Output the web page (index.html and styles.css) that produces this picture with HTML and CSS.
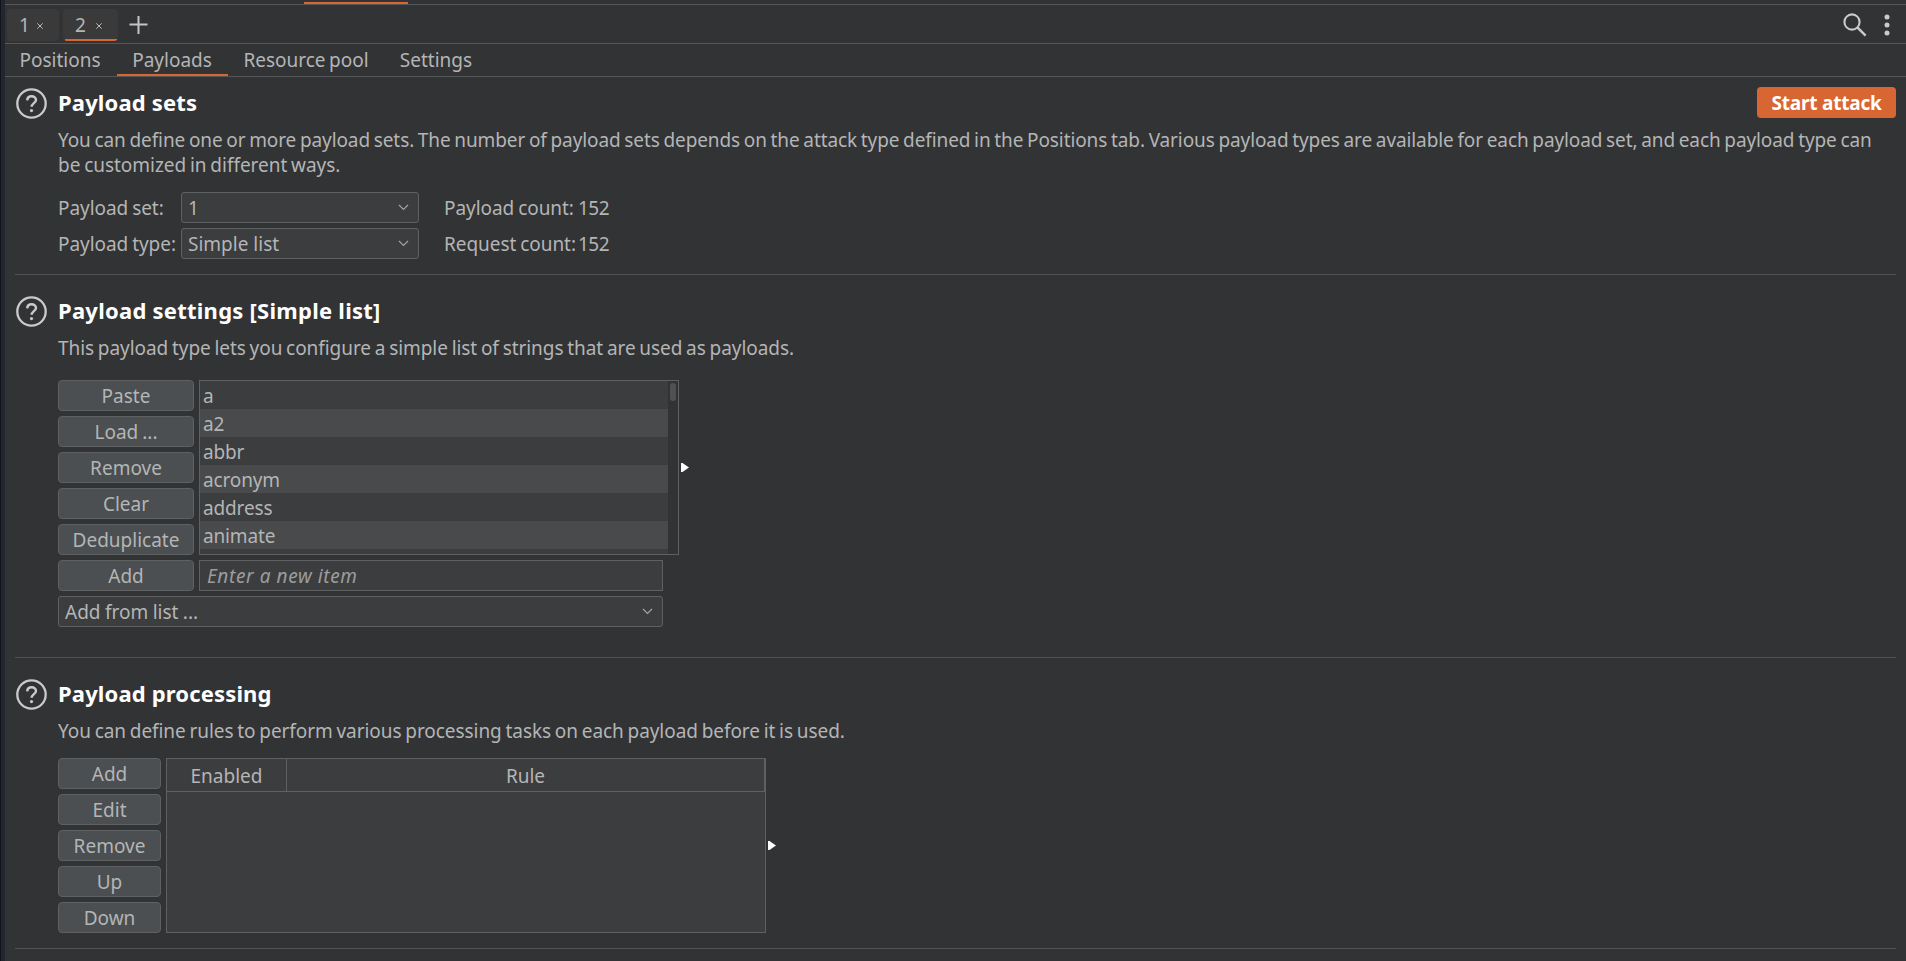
FILE: index.html
```html
<!DOCTYPE html>
<html lang="en">
<head>
<meta charset="utf-8">
<title>Intruder - Payloads</title>
<link rel="stylesheet" href="styles.css">
</head>
<body>
<svg class="defs" width="0" height="0">
  <symbol id="help" viewBox="0 0 31 31">
    <circle cx="15.5" cy="15.5" r="14.2" fill="none" stroke="#c9cacb" stroke-width="2.3"/>
    <path d="M11.2 12.3C11.4 9.7 13.2 8.3 15.6 8.3C18.2 8.3 20 9.9 20 12C20 14.8 15.6 15.6 15.6 18.8" fill="none" stroke="#c9cacb" stroke-width="2.4"/>
    <circle cx="15.5" cy="22.6" r="1.6" fill="#c9cacb"/>
  </symbol>
  <symbol id="chevron" viewBox="0 0 11 7">
    <path d="M1 1L5.5 5.5L10 1" fill="none" stroke="#a2a4a5" stroke-width="1.2"/>
  </symbol>
  <symbol id="expand" viewBox="0 0 8 9">
    <path d="M0 0H1.5L8 4.5L1.5 9H0Z" fill="#fff"/>
  </symbol>
  <symbol id="close" viewBox="0 0 6 6">
    <path d="M.3 .3L5.7 5.7M5.7 .3L.3 5.7" stroke="#bbb" stroke-width="1"/>
  </symbol>
</svg>
<div class="window">
  <div class="tool-tabs"><div class="tool-marker"></div></div>

  <div class="attack-tabs">
    <div class="attack-tab first"><span>1</span><svg class="close"><use href="#close"/></svg></div>
    <div class="attack-tab second active"><span>2</span><svg class="close"><use href="#close"/></svg></div>
    <svg class="plus" viewBox="0 0 19 18"><path d="M.5 8.5H18.5M9.5 0V18" stroke="#c4c5c6" stroke-width="2"/></svg>
    <div class="tab-tools">
      <svg class="search" viewBox="0 0 24 24"><circle cx="9" cy="9" r="7.6" fill="none" stroke="#c9cacb" stroke-width="2.1"/><path d="M14.3 14.3L22.6 22.6" stroke="#c9cacb" stroke-width="2.4"/></svg>
      <svg class="kebab" viewBox="0 0 6 22"><circle cx="3" cy="3" r="2.5"/><circle cx="3" cy="11" r="2.5"/><circle cx="3" cy="19" r="2.5"/></svg>
    </div>
  </div>

  <div class="sub-tabs">
    <div class="sub-tab w-positions">Positions</div>
    <div class="sub-tab w-payloads active">Payloads</div>
    <div class="sub-tab w-pool">Resource pool</div>
    <div class="sub-tab w-settings">Settings</div>
  </div>

  <section class="section sets">
    <div class="head"><svg class="help"><use href="#help"/></svg><h2>Payload sets</h2><button class="start">Start attack</button></div>
    <p><span class="long">You can define one or more payload sets. The number of payload sets depends on the attack type defined in the Positions tab. Various payload types are available for each payload set, and each payload type can</span><br>be customized in different ways.</p>
    <div class="form">
      <label>Payload set:</label><div class="combo"><span>1</span><svg class="chevron"><use href="#chevron"/></svg></div><span class="count">Payload count:</span><span class="number">152</span>
      <label>Payload type:</label><div class="combo"><span>Simple list</span><svg class="chevron"><use href="#chevron"/></svg></div><span class="count">Request count:</span><span class="number">152</span>
    </div>
  </section>

  <section class="section settings">
    <div class="head"><svg class="help"><use href="#help"/></svg><h2>Payload settings [Simple list]</h2></div>
    <p>This payload type lets you configure a simple list of strings that are used as payloads.</p>
    <div class="row">
      <div class="buttons wide">
        <button>Paste</button><button>Load ...</button><button>Remove</button><button>Clear</button><button>Deduplicate</button>
      </div>
      <div class="list">
        <ul><li>a</li><li>a2</li><li>abbr</li><li>acronym</li><li>address</li><li>animate</li></ul>
        <div class="scroll"><div class="thumb"></div></div>
      </div>
      <svg class="expand"><use href="#expand"/></svg>
    </div>
    <div class="row add">
      <div class="buttons wide"><button>Add</button></div>
      <div class="field">Enter a new item</div>
    </div>
    <div class="combo from-list"><span>Add from list ...</span><svg class="chevron"><use href="#chevron"/></svg></div>
  </section>

  <section class="section processing">
    <div class="head"><svg class="help"><use href="#help"/></svg><h2>Payload processing</h2></div>
    <p>You can define rules to perform various processing tasks on each payload before it is used.</p>
    <div class="row">
      <div class="buttons">
        <button>Add</button><button>Edit</button><button>Remove</button><button>Up</button><button>Down</button>
      </div>
      <div class="table"><div class="thead"><div class="th">Enabled</div><div class="th">Rule</div></div></div>
      <svg class="expand"><use href="#expand"/></svg>
    </div>
  </section>
</div>
</body>
</html>
```
FILE: styles.css
```css
* { box-sizing: border-box; }
body {
  margin: 0;
  height: 961px;
  overflow: hidden;
  background: #12141c;
  color: #b4b5b5;
  font: 19px/25px "Noto Sans", sans-serif;
  white-space: nowrap;
}
svg { display: block; flex: none; }
.defs { position: absolute; }
.window {
  height: 961px;
  border-left: 4px solid #23252f;
  margin-left: 1px;
  background: #323335;
}
.tool-tabs { height: 5px; padding: 2px 0 0 299px; border-bottom: 1px solid #545657; }
.tool-marker { width: 104px; height: 2px; background: #d86633; }

.attack-tabs { display: flex; height: 39px; padding: 4px 16px 0 2px; border-bottom: 1px solid #545657; }
.attack-tab {
  display: flex;
  align-items: center;
  height: 32px;
  padding-left: 12px;
  border-radius: 4px;
  background: #3a3a3a;
}
.first { width: 52px; }
.second { width: 55px; margin-left: 4px; }
.attack-tab.active { background: linear-gradient(#d86633, #d86633) 2px 30px / 52px 2px no-repeat #3a3a3a; }
.attack-tab span { width: 11px; }
.close { width: 6px; height: 6px; margin: 1px 0 0 7px; }
.second .close { margin-left: 10px; }
.plus { width: 19px; height: 18px; margin: 7px 0 0 11px; }
.tab-tools { display: flex; gap: 17px; margin-left: auto; padding-top: 4px; }
.search { width: 24px; height: 24px; }
.kebab { width: 6px; height: 22px; margin-top: 1px; fill: #c9cacb; }

.sub-tabs { display: flex; height: 33px; border-bottom: 1px solid #545657; }
.sub-tab { height: 32px; line-height: 33px; text-align: center; border-bottom: 2px solid transparent; word-spacing: -1.5px; }
.sub-tab.active { border-color: #d86633; }
.w-positions { width: 112px; padding-right: 2px; }
.w-payloads { width: 111px; padding-right: 1px; }
.w-pool { width: 156px; }
.w-settings { width: 104px; }

.section { margin: 0 10px; padding-left: 43px; border-bottom: 1px solid #4f5152; }
.sets { height: 198px; padding-top: 11px; }
.settings { height: 383px; padding-top: 21px; }
.processing { height: 291px; padding-top: 21px; }
.head { display: flex; align-items: center; height: 31px; margin-left: -42px; }
.help { width: 31px; height: 31px; }
h2 { margin: 0 0 2px 11px; font-size: 22px; line-height: 31px; letter-spacing: .15px; color: #fff; }
.settings h2 { letter-spacing: .25px; }
p { margin: 9px -10px 0 0; letter-spacing: -.06px; word-spacing: -1.1px; }
.sets p { letter-spacing: -.03px; }
.sets .long { letter-spacing: -.1px; }
button {
  display: block;
  width: 103px;
  height: 31px;
  padding: 2px 0 0;
  border: 1px solid #5e6061;
  border-radius: 4px;
  background: #4b4f51;
  color: #b4b5b5;
  font: inherit;
  line-height: 27px;
}
.start { width: 139px; margin: 0 0 2px auto; border: 0; background: #d86633; color: #fff; font-weight: 700; letter-spacing: -.2px; }
.form {
  display: grid;
  grid-template-columns: 123px 238px 159px auto;
  grid-auto-rows: 31px;
  row-gap: 5px;
  align-items: center;
  margin-top: 14px;
}
label, .count, .number { padding-top: 2px; letter-spacing: -.05px; word-spacing: -1px; }
.count { padding-left: 25px; }
.number { letter-spacing: -.5px; }
.combo {
  display: flex;
  align-items: center;
  justify-content: space-between;
  height: 31px;
  padding: 0 9px 0 6px;
  border: 1px solid #5e6061;
  border-radius: 3px;
  background: #3c3d3f;
}
.combo span { padding-top: 2px; }
.chevron { width: 11px; height: 7px; }
.row { display: flex; }
.settings .row { margin-top: 19px; }
.settings .row.add { margin-top: 5px; }
.processing .row { margin-top: 14px; }
.buttons { display: flex; flex-direction: column; gap: 5px; margin-right: 5px; }
.buttons.wide button { width: 136px; word-spacing: -1px; }
.list { display: flex; width: 480px; height: 175px; border: 1px solid #5e6061; background: #3c3d3f; overflow: hidden; }
ul { flex: 1; margin: 0; padding: 0; list-style: none; }
li { height: 28px; padding-left: 3px; line-height: 31px; letter-spacing: -.15px; }
li:nth-child(even) { background: #494a4c; }
.scroll { width: 10px; padding: 2px; background: #323335; }
.thumb { width: 6px; height: 18px; border-radius: 3px; background: #505153; }
.expand { width: 8px; height: 9px; margin: 83px 0 0 2px; }
.field { width: 464px; height: 31px; padding-left: 7px; border: 1px solid #5e6061; background: #3c3d3f; line-height: 30px; font-style: italic; letter-spacing: .6px; color: #9c9d9e; }
.from-list { width: 605px; margin-top: 5px; word-spacing: -.5px; }
.table { width: 600px; height: 175px; border: 1px solid #5e6061; background: #3c3d3f; }
.thead { display: flex; height: 33px; border-bottom: 1px solid #5e6061; }
.th { width: 120px; border-right: 1px solid #5e6061; text-align: center; line-height: 34px; }
.th:last-child { width: auto; flex: 1; }
```
